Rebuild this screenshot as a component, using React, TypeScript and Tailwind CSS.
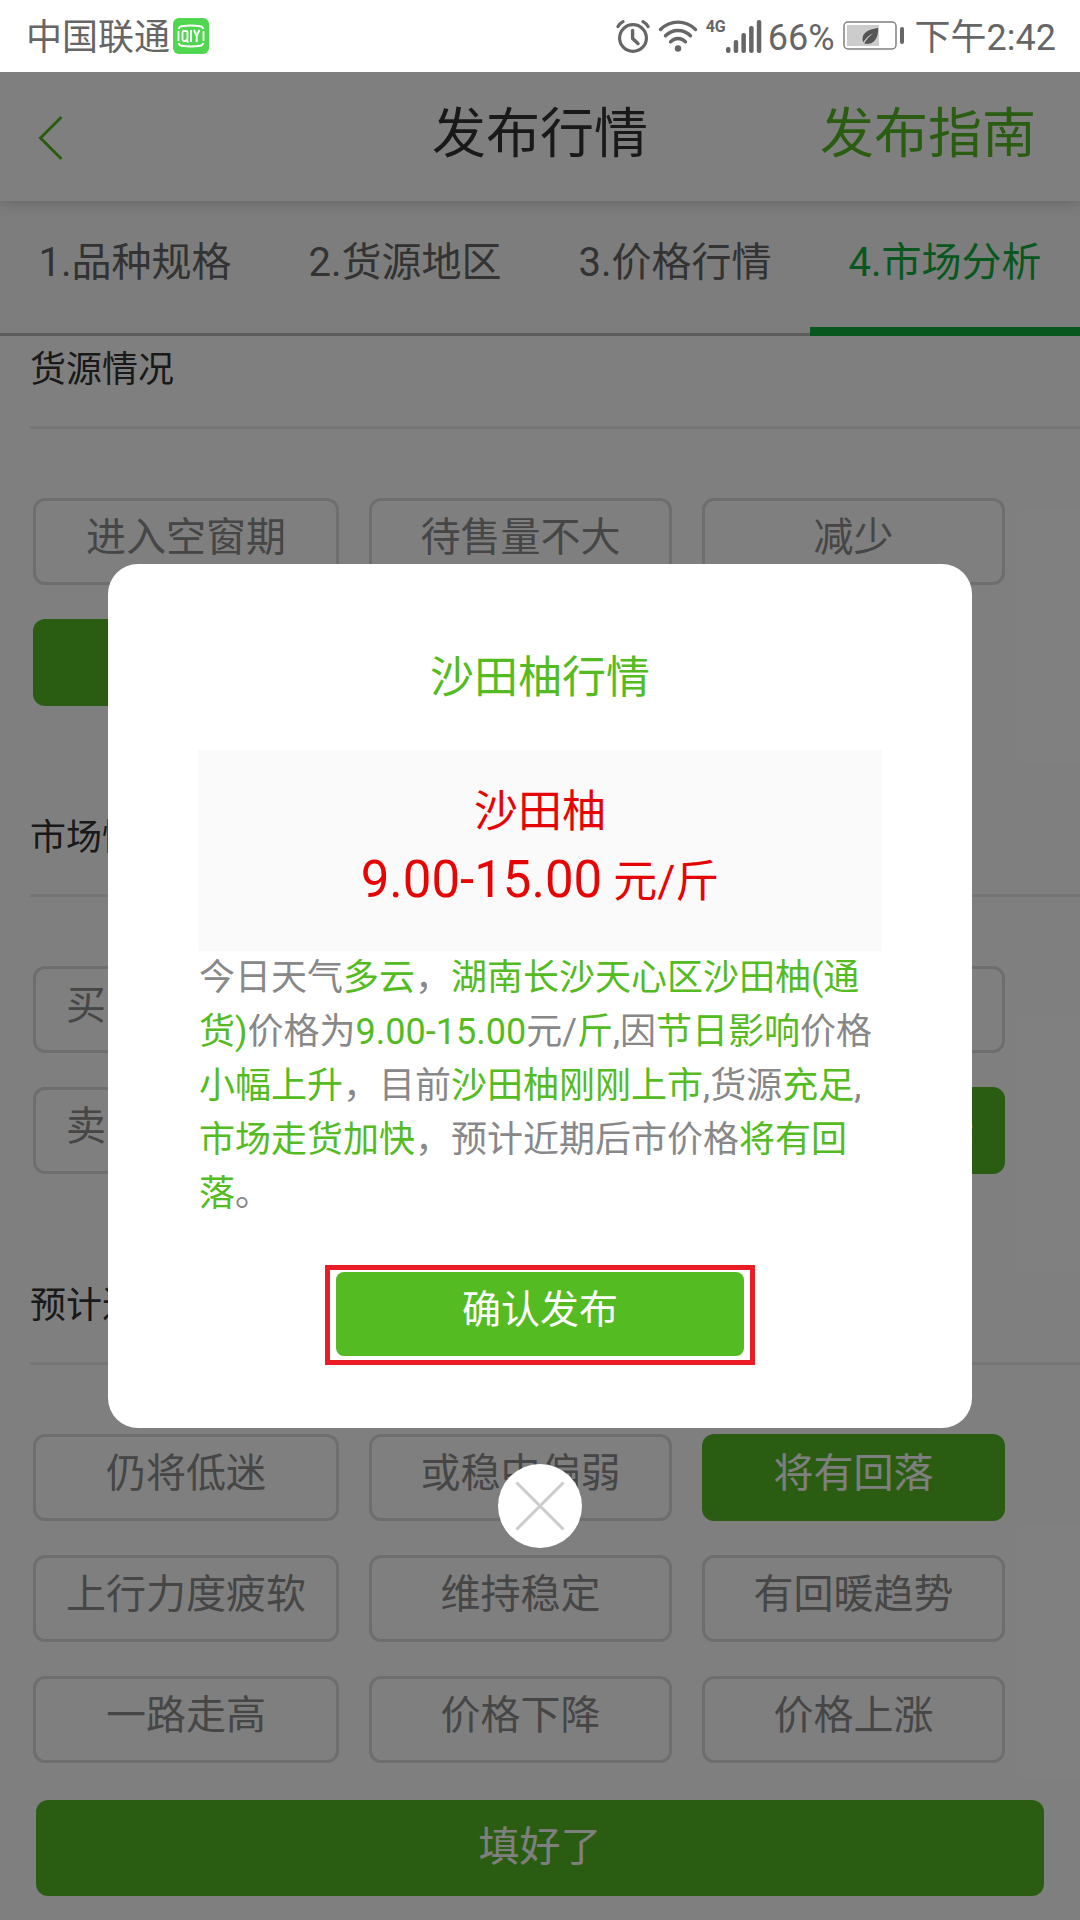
import { useState } from "react";

type Section = { title: string; options: string[]; selected: string };

const tabs = ["1.品种规格", "2.货源地区", "3.价格行情", "4.市场分析"];

const sections: Section[] = [
  {
    title: "货源情况",
    options: ["进入空窗期", "待售量不大", "减少", "充足"],
    selected: "充足",
  },
  {
    title: "市场情况",
    options: ["买方拿货谨慎", "走货平稳", "走货一般", "卖方急于出货", "走货缓慢", "市场走货加快"],
    selected: "市场走货加快",
  },
  {
    title: "预计近期后市",
    options: [
      "仍将低迷",
      "或稳中偏弱",
      "将有回落",
      "上行力度疲软",
      "维持稳定",
      "有回暖趋势",
      "一路走高",
      "价格下降",
      "价格上涨",
    ],
    selected: "将有回落",
  },
];

function AlarmIcon() {
  return (
    <svg className="h-[36px] w-[34px]" viewBox="0 0 34 36" fill="none" stroke="#666" strokeLinecap="round" aria-hidden="true">
      <circle cx="17" cy="20" r="13.4" strokeWidth="3.2" />
      <path d="M16.6 12.5v8l5.4 5" strokeWidth="3.4" strokeLinejoin="round" />
      <path d="M2 8.5c1.2-2.2 2.800-3.700 5-4.900M32 8.500c-1.200-2.200-2.800-3.700-5-4.900" strokeWidth="3.200" />
    </svg>
  );
}

function WifiIcon() {
  return (
    <svg className="h-[36px] w-[40px]" viewBox="0 0 40 36" fill="none" stroke="#666" strokeWidth="3.4" strokeLinecap="round" aria-hidden="true">
      <path d="M2.500 11.500C12.500 1.700 27.500 1.700 37.500 11.500" />
      <path d="M7.500 17.800C14.500 10.800 25.500 10.800 32.500 17.800" />
      <path d="M12.500 23.800C16.700 19.400 23.300 19.400 27.500 23.800" />
      <circle cx="20" cy="30.500" r="3.200" fill="#666" stroke="none" />
    </svg>
  );
}

function SignalIcon() {
  return (
    <svg className="h-[36px] w-[36px]" viewBox="0 0 36 36" fill="#666" aria-hidden="true">
      <rect x="0" y="29" width="4.500" height="6" rx="2" />
      <rect x="7.700" y="22" width="4.500" height="13" rx="2" />
      <rect x="15.400" y="15" width="4.500" height="20" rx="2" />
      <rect x="23.100" y="8" width="4.500" height="27" rx="2" />
      <rect x="30.800" y="2" width="4.500" height="33" rx="2" />
    </svg>
  );
}

function BatteryIcon() {
  return (
    <svg className="h-[32px] w-[62px]" viewBox="0 0 62 32" aria-hidden="true">
      <rect x="1" y="2" width="52" height="27" rx="4" fill="none" stroke="#808080" strokeWidth="1.500" />
      <rect x="4" y="5" width="32" height="21" fill="#ccc" />
      <rect x="57" y="7" width="4" height="17" rx="2" fill="#666" />
      <path d="M35 8c-8 1-15.500 4-15.500 11 0 1.300.3 2.400.7 3.300 3-4.500 6-7 10-9-3.700 2.800-6.500 6-9 10.200 1.500.5 3 .5 4.500.3 7-1 9.800-8 9.300-15.800z" fill="#555" />
    </svg>
  );
}

function VideoAppIcon() {
  return (
    <svg className="h-[36px] w-[36px]" viewBox="0 0 36 36" fill="none" stroke="#fff" aria-hidden="true">
      <rect width="36" height="36" rx="6" fill="#50d650" stroke="none" />
      <path d="M6 11c0-1.600 1-2.500 2.600-2.700 6-.9 12.800-.9 18.800 0C29 8.500 30 9.400 30 11M6 25c0 1.600 1 2.500 2.600 2.700 6 .9 12.800.9 18.800 0C29 27.500 30 26.600 30 25" strokeWidth="2" />
      <path d="M5.500 13v10M30.500 13v10" strokeWidth="1.800" />
      <rect x="9.500" y="13" width="5" height="10" rx="1.500" strokeWidth="1.800" />
      <path d="M13 21l2.300 3.500M18 12v12M21 12l2.700 6 2.700-6M23.700 17.500V24" strokeWidth="1.900" />
    </svg>
  );
}

function StatusBar() {
  return (
    <div className="relative z-30 flex h-[72px] items-center justify-between bg-white pl-[26px] pr-6 text-[36px] leading-[68px] text-[#666]">
      <div className="flex items-center gap-[3px]">
        <span className="pt-1">中国联通</span>
        <VideoAppIcon />
      </div>
      <div className="flex items-center">
        <AlarmIcon />
        <span className="ml-2">
          <WifiIcon />
        </span>
        <span className="ml-2 self-start pt-[17px] text-[16px] font-bold leading-5">4G</span>
        <SignalIcon />
        <span className="ml-1.5 pt-1">66%</span>
        <span className="ml-2">
          <BatteryIcon />
        </span>
        <span className="ml-2.5 pt-1">下午2:42</span>
      </div>
    </div>
  );
}

function Header() {
  return (
    <header className="relative z-10 grid h-[129px] grid-cols-[1fr_auto_1fr] items-center bg-white px-11 text-[54px] shadow-[0_0_18px_rgba(0,0,0,0.24)]">
      <button type="button" aria-label="返回" className="-ml-2 justify-self-start">
        <svg className="h-12 w-8" viewBox="0 0 32 48" fill="none" stroke="#54bb22" strokeWidth="3">
          <path d="M25.500 4L4.500 25l21 21" />
        </svg>
      </button>
      <h1 className="pb-1 text-[#333]">发布行情</h1>
      <a href="#guide" className="justify-self-end pb-1 text-[#54bb22]">
        发布指南
      </a>
    </header>
  );
}

function Tabs() {
  const [active, setActive] = useState(3);
  return (
    <nav className="grid h-[135px] grid-cols-4 bg-[#fbfbfb] text-[40px]">
      {tabs.map((tab, i) => (
        <button
          key={tab}
          type="button"
          onClick={() => setActive(i)}
          className={
            i === active
              ? "border-b-9 border-[#0eae3e] pb-[3px] text-[#0eae3e]"
              : "border-b-3 border-[#b9b9b9] pb-[9px] text-[#666]"
          }
        >
          {tab}
        </button>
      ))}
    </nav>
  );
}

function OptionSection({ section }: { section: Section }) {
  const [selected, setSelected] = useState(section.selected);
  return (
    <section>
      <h2 className="ml-[30px] h-[93px] border-b-3 border-[#ebebeb] text-[36px] leading-[68px] text-[#333]">
        {section.title}
      </h2>
      <div className="mt-[69px] grid grid-cols-[306fr_303fr_303fr] gap-x-[30px] gap-y-[34px] pl-[33px] pr-[75px]">
        {section.options.map((option) => (
          <button
            key={option}
            type="button"
            aria-pressed={option === selected}
            onClick={() => setSelected(option)}
            className={
              option === selected
                ? "h-[87px] rounded-xl bg-[#54bb22] pb-2 text-[40px] text-white"
                : "h-[87px] rounded-xl border-3 border-[#dcdcdc] pb-2 text-[40px] text-[#8c8c8c]"
            }
          >
            {option}
          </button>
        ))}
      </div>
    </section>
  );
}

function Em({ children }: { children: string }) {
  return <em className="not-italic text-[#54bb22]">{children}</em>;
}

function ConfirmDialog() {
  return (
    <div className="absolute inset-0 z-20 flex items-center justify-center bg-black/50">
      <div
        role="dialog"
        aria-modal="true"
        aria-labelledby="dialog-title"
        className="relative flex w-4/5 flex-col items-center rounded-[30px] bg-white px-[90px] pb-[63px] pt-[78px]"
      >
        <h2 id="dialog-title" className="text-[44px] leading-[72px] text-[#54bb22]">
          沙田柚行情
        </h2>
        <div className="mt-9 w-full bg-[#fafafa] pb-[35px] pt-7 text-center text-[44px] leading-[68px] text-[#e60505]">
          <p>沙田柚</p>
          <p>
            <span className="text-[51px]">9.00-15.00</span> 元/斤
          </p>
        </div>
        <p className="w-full pl-px text-[36px] leading-[54px] text-[#888]">
          今日天气<Em>多云</Em>，<Em>湖南长沙天心区沙田柚(通货)</Em>价格为<Em>9.00-15.00</Em>元/<Em>斤</Em>,因
          <Em>节日影响</Em>价格<Em>小幅上升</Em>，目前<Em>沙田柚刚刚上市</Em>,货源<Em>充足</Em>,
          <Em>市场走货加快</Em>，预计近期后市价格<Em>将有回落</Em>。
        </p>
        <div className="mt-11 border-5 border-[#ea1c24] px-1.5 pb-1 pt-0.5">
          <button type="button" className="h-[84px] w-[408px] rounded-lg bg-[#54bb22] pb-2 text-[39px] text-white">
            确认发布
          </button>
        </div>
        <button
          type="button"
          aria-label="关闭"
          className="absolute left-1/2 top-full mt-9 size-[84px] -translate-x-1/2 rounded-full bg-white"
        >
          <svg className="size-full" viewBox="0 0 84 84" fill="none" stroke="#ccc" strokeWidth="3">
            <path d="M18.500 18.500l47 47M65.500 18.500l-47 47" />
          </svg>
        </button>
      </div>
    </div>
  );
}

export default function App() {
  return (
    <div lang="zh-CN" className="flex min-h-screen flex-col bg-white font-[Roboto,'Noto_Sans_CJK_SC',sans-serif]">
      <StatusBar />
      <div className="relative flex-1">
        <Header />
        <Tabs />
        <main className="flex flex-col gap-[98px]">
          {sections.map((section) => (
            <OptionSection key={section.title} section={section} />
          ))}
        </main>
        <div className="px-9 pb-6 pt-[37px]">
          <button type="button" className="h-24 w-full rounded-xl bg-[#54bb22] text-[41px] text-white">
            填好了
          </button>
        </div>
        <ConfirmDialog />
      </div>
    </div>
  );
}
